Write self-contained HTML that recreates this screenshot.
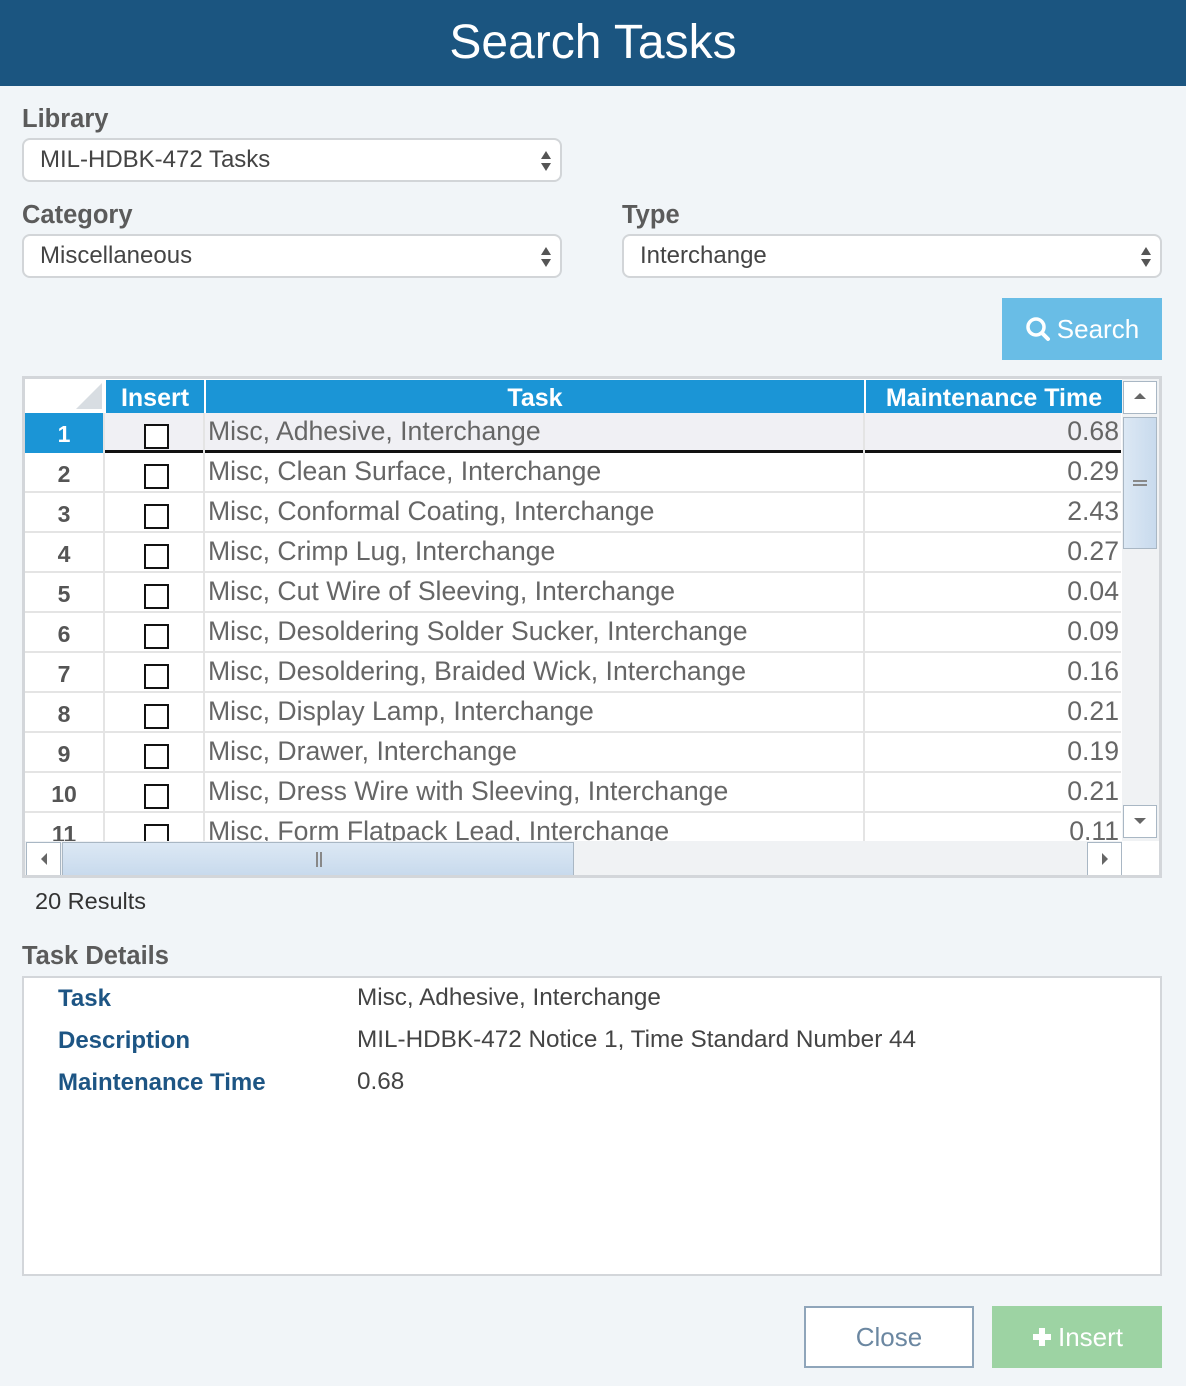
<!DOCTYPE html>
<html><head><meta charset="utf-8"><style>
*{box-sizing:border-box;margin:0;padding:0}
body{width:1186px;height:1386px;background:#f1f5f8;font-family:"Liberation Sans",sans-serif;position:relative;overflow:hidden;color:#555}
.a{position:absolute}
.hdr{left:0;top:0;width:1186px;height:86px;background:#1b5580;color:#fff;font-size:48px;text-align:center;line-height:86px}
.lbl{font-size:25.5px;font-weight:bold;color:#5b5b5b}
.sel{background:#fff;border:2px solid #d2d5d8;border-radius:8px;height:44px;font-size:24px;color:#444;padding-left:16px;line-height:40px}
.arr{position:absolute;right:8px;top:9px;width:12px;height:24px}
.grid{left:22px;top:376px;width:1140px;height:502px;border:3px solid #d3d6da;background:#fff;overflow:hidden}
.row{position:absolute;left:0;width:1096px;height:40px;border-bottom:2px solid #e4e4e4;font-size:26.6px;color:#666}
.c{position:absolute;top:0;height:40px;border-right:2px solid #e4e4e4;line-height:36px}
.n{left:0;width:80px;text-align:center;font-weight:bold;font-size:23px;color:#555;line-height:42px}
.i{left:80px;width:100px}
.i span{position:absolute;left:39px;top:11px;width:25px;height:25px;border:2px solid #111;background:#fff}
.t{left:180px;width:660px;padding-left:3px}
.m{left:840px;width:256px;text-align:right;padding-right:2px;border-right:none}
.th{position:absolute;top:1px;height:33px;background:#1b95d6;color:#fff;font-weight:bold;font-size:25px;text-align:center;line-height:36px}
.btn{font-size:26px;text-align:center}
.dl{font-size:24px;font-weight:bold;color:#1d5584}
.dv{font-size:24.3px;color:#444}
</style></head><body>
<div class="a hdr">Search Tasks</div>
<div class="a lbl" style="left:22px;top:105px">Library</div>
<div class="a sel" style="left:22px;top:138px;width:540px">MIL-HDBK-472 Tasks<svg class="arr" viewBox="0 0 12 24"><path d="M6 2L11 10H1Z M6 22L11 14H1Z" fill="#555"/></svg></div>
<div class="a lbl" style="left:22px;top:201px">Category</div>
<div class="a sel" style="left:22px;top:234px;width:540px">Miscellaneous<svg class="arr" viewBox="0 0 12 24"><path d="M6 2L11 10H1Z M6 22L11 14H1Z" fill="#555"/></svg></div>
<div class="a lbl" style="left:622px;top:201px">Type</div>
<div class="a sel" style="left:622px;top:234px;width:540px">Interchange<svg class="arr" viewBox="0 0 12 24"><path d="M6 2L11 10H1Z M6 22L11 14H1Z" fill="#555"/></svg></div>
<div class="a btn" style="left:1002px;top:298px;width:160px;height:62px;background:#69bde6;color:#fff;line-height:62px"><svg width="26" height="26" viewBox="0 0 26 26" style="vertical-align:-4px;margin-right:6px"><circle cx="11" cy="11" r="8" stroke="#fff" stroke-width="3.5" fill="none"/><path d="M17 17L23 23" stroke="#fff" stroke-width="4" stroke-linecap="round"/></svg>Search</div>

<div class="a grid">
  <div class="a" style="left:0;top:0;width:80px;height:35px;background:#fff"><svg width="80" height="33"><path d="M77 4V30H51Z" fill="#d8dde2"/></svg></div>
  <div class="th" style="left:81px;width:98px">Insert</div>
  <div class="th" style="left:181px;width:658px">Task</div>
  <div class="th" style="left:841px;width:256px">Maintenance Time</div>
  <div class="row" style="top:34px;background:#f0f0f4;border-bottom:3px solid #111"><div class="c n" style="background:#1b95d6;color:#fff">1</div><div class="c i"><span></span></div><div class="c t">Misc, Adhesive, Interchange</div><div class="c m">0.68</div></div>
  <div class="row" style="top:74px"><div class="c n">2</div><div class="c i"><span></span></div><div class="c t">Misc, Clean Surface, Interchange</div><div class="c m">0.29</div></div>
  <div class="row" style="top:114px"><div class="c n">3</div><div class="c i"><span></span></div><div class="c t">Misc, Conformal Coating, Interchange</div><div class="c m">2.43</div></div>
  <div class="row" style="top:154px"><div class="c n">4</div><div class="c i"><span></span></div><div class="c t">Misc, Crimp Lug, Interchange</div><div class="c m">0.27</div></div>
  <div class="row" style="top:194px"><div class="c n">5</div><div class="c i"><span></span></div><div class="c t">Misc, Cut Wire of Sleeving, Interchange</div><div class="c m">0.04</div></div>
  <div class="row" style="top:234px"><div class="c n">6</div><div class="c i"><span></span></div><div class="c t">Misc, Desoldering Solder Sucker, Interchange</div><div class="c m">0.09</div></div>
  <div class="row" style="top:274px"><div class="c n">7</div><div class="c i"><span></span></div><div class="c t">Misc, Desoldering, Braided Wick, Interchange</div><div class="c m">0.16</div></div>
  <div class="row" style="top:314px"><div class="c n">8</div><div class="c i"><span></span></div><div class="c t">Misc, Display Lamp, Interchange</div><div class="c m">0.21</div></div>
  <div class="row" style="top:354px"><div class="c n">9</div><div class="c i"><span></span></div><div class="c t">Misc, Drawer, Interchange</div><div class="c m">0.19</div></div>
  <div class="row" style="top:394px"><div class="c n">10</div><div class="c i"><span></span></div><div class="c t">Misc, Dress Wire with Sleeving, Interchange</div><div class="c m">0.21</div></div>
  <div class="row" style="top:434px"><div class="c n">11</div><div class="c i"><span></span></div><div class="c t">Misc, Form Flatpack Lead, Interchange</div><div class="c m">0.11</div></div>
  <div class="a" style="left:1097px;top:0;width:37px;height:462px;background:#f0f2f4"></div>
  <div class="a" style="left:1098px;top:2px;width:34px;height:33px;background:#fff;border:1px solid #a9b7c4"><svg width="32" height="31"><path d="M16 11L22 17H10Z" fill="#666"/></svg></div>
  <div class="a" style="left:1098px;top:38px;width:34px;height:132px;background:linear-gradient(90deg,#dce8f4,#c8daed);border:1px solid #a9b7c4"><svg width="32" height="130"><path d="M9 63H23M9 67H23" stroke="#888" stroke-width="2"/></svg></div>
  <div class="a" style="left:1098px;top:426px;width:34px;height:33px;background:#fff;border:1px solid #a9b7c4"><svg width="32" height="31"><path d="M10 12H22L16 18Z" fill="#666"/></svg></div>
  <div class="a" style="left:0;top:462px;width:1097px;height:35px;background:#f0f2f4"></div>
  <div class="a" style="left:1px;top:463px;width:35px;height:34px;background:#fff;border:1px solid #a9b7c4"><svg width="33" height="32"><path d="M20 10V22L14 16Z" fill="#666"/></svg></div>
  <div class="a" style="left:37px;top:463px;width:512px;height:34px;background:linear-gradient(#dce8f4,#c8daed);border:1px solid #a9b7c4"><svg width="510" height="32"><path d="M254 9V24M258 9V24" stroke="#888" stroke-width="2"/></svg></div>
  <div class="a" style="left:1062px;top:463px;width:35px;height:34px;background:#fff;border:1px solid #a9b7c4"><svg width="33" height="32"><path d="M14 10V22L20 16Z" fill="#666"/></svg></div>
</div>

<div class="a" style="left:35px;top:888px;font-size:23.5px;color:#333">20 Results</div>
<div class="a lbl" style="left:22px;top:942px">Task Details</div>
<div class="a" style="left:22px;top:976px;width:1140px;height:300px;background:#fff;border:2px solid #d3d6da"></div>
<div class="a dl" style="left:58px;top:985px">Task</div>
<div class="a dl" style="left:58px;top:1027px">Description</div>
<div class="a dl" style="left:58px;top:1069px">Maintenance Time</div>
<div class="a dv" style="left:357px;top:984px">Misc, Adhesive, Interchange</div>
<div class="a dv" style="left:357px;top:1026px">MIL-HDBK-472 Notice 1, Time Standard Number 44</div>
<div class="a dv" style="left:357px;top:1068px">0.68</div>

<div class="a btn" style="left:804px;top:1306px;width:170px;height:62px;background:#fff;border:2px solid #8fa5ba;color:#6b87a1;line-height:58px">Close</div>
<div class="a btn" style="left:992px;top:1306px;width:170px;height:62px;background:#9dd3a3;color:#fff;line-height:62px"><svg width="22" height="22" viewBox="0 0 22 22" style="vertical-align:-2px;margin-right:5px"><path d="M11 2V20M2 11H20" stroke="#fff" stroke-width="6"/></svg>Insert</div>
</body></html>
